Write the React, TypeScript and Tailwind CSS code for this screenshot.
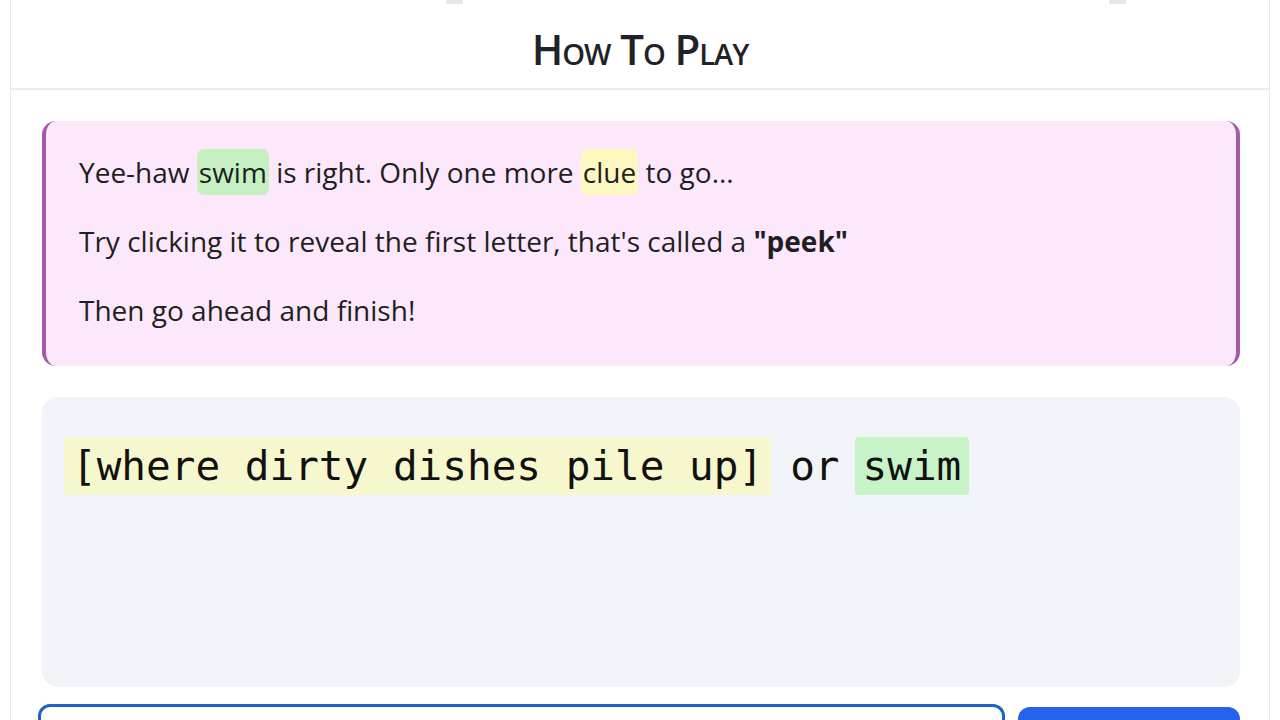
import React from 'react';

const sans = { fontFamily: '"Open Sans", "Noto Sans", sans-serif' };

export default function App() {
  return (
    <div className="h-[720px] bg-white overflow-hidden" style={sans}>
      <div className="mx-[10px] border-x border-[#e5e7eb] h-[720px] flex flex-col">
        <div className="h-[4px] shrink-0 flex">
          <div className="ml-[435px] w-[17px] h-[4px] bg-[#e5e7eb]" />
          <div className="ml-[646px] w-[17px] h-[4px] bg-[#e5e7eb]" />
        </div>
        <div className="h-[86px] shrink-0 flex items-center justify-center border-b-2 border-[#e8edf1]">
          <h2 className="text-[42px] leading-[48px] font-semibold text-[#1f2328] tracking-tight [font-variant:small-caps] mt-[6px]">
            How To Play
          </h2>
        </div>
        <div className="pl-[31px] pr-[29px] pt-[31px] flex flex-col shrink-0">
          <div className="h-[245px] shrink-0 bg-[#fde7fb] border-x-[4px] border-[#a558a8] rounded-[14px] pl-[33px] pt-[33px] text-[28px] text-[#1f1f1f] flex flex-col gap-[33px] leading-[36px]">
            <p>
              Yee-haw{' '}
              <span className="bg-[#c6f0c2] rounded-[7px] px-[2px] py-[4px]">swim</span> is right. Only one more{' '}
              <span className="bg-[#fdf8c0] rounded-[7px] px-[2px] py-[4px]">clue</span> to go...
            </p>
            <p>
              Try clicking it to reveal the first letter, that's called a <b>"peek"</b>
            </p>
            <p>Then go ahead and finish!</p>
          </div>
          <div className="mt-[31px] h-[290px] shrink-0 bg-[#f0f3f8] rounded-[16px] pl-[22px] pt-[40px]">
            <p
              className="text-[41px] leading-[58px] text-[#111] flex"
              style={{ fontFamily: '"DejaVu Sans Mono", monospace' }}
            >
              <span className="bg-[#f7f7cd] px-[8px] rounded-[3px]">[where dirty dishes pile up]</span>
              <span className="ml-[19px]">or</span>
              <span className="ml-[15px] bg-[#c8f2c8] px-[8px] rounded-[4px]">swim</span>
            </p>
          </div>
          <div className="mt-[17px] flex gap-[13px] shrink-0">
            <div className="flex-1 -ml-[4px] h-[40px] border-[3px] border-[#1d64c7] rounded-[12px] bg-white" />
            <div className="w-[222px] mt-[3px] h-[40px] bg-[#2563eb] rounded-[12px]" />
          </div>
        </div>
      </div>
    </div>
  );
}
